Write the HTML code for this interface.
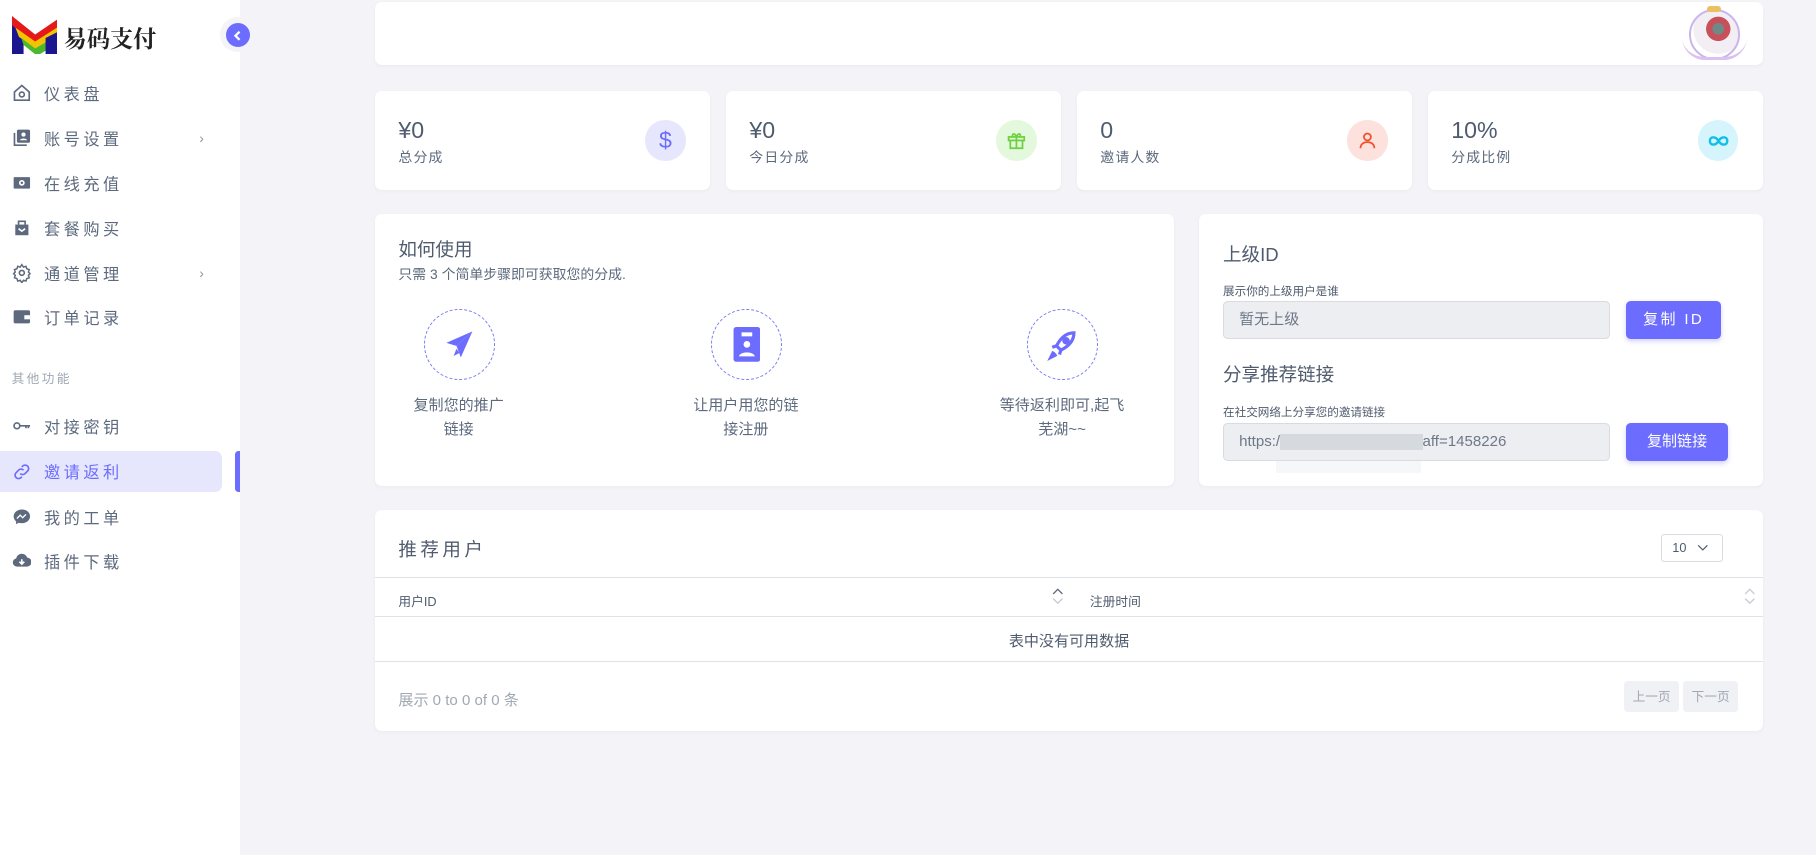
<!DOCTYPE html>
<html><head><meta charset="utf-8"><style>
html{zoom:1.1582}
*{box-sizing:border-box;margin:0;padding:0}
body{width:1568px;height:738px;background:#f4f4f8;font-family:"Liberation Sans","Noto Sans CJK SC",sans-serif;color:#5d6a7e;position:relative;overflow:hidden}
.abs{position:absolute}
.side{left:0;top:0;width:207px;height:738px;background:#fff}
.mi{position:absolute;left:0;width:192px;height:36px;display:flex;align-items:center;font-size:14px;letter-spacing:3px;color:#5d6a7e}
.mi svg{position:absolute;left:10px;width:17px;height:17px}
.mi span{position:absolute;left:38px}
.mi .ar{left:172px;font-size:12px;color:#8a94a6}
.card{position:absolute;background:#fff;border-radius:6px;box-shadow:0 1px 3px rgba(0,0,0,.04)}
.val{position:absolute;left:20px;top:22px;font-size:20px;color:#4f5b6e}
.lab{position:absolute;left:20px;top:48px;font-size:12px;letter-spacing:1px;color:#5d6a7e}
.ic{position:absolute;right:21px;top:25px;width:35px;height:35px;border-radius:50%;display:flex;align-items:center;justify-content:center}
.circ{position:absolute;width:61px;height:61px;border:1px dashed #7b7bf2;border-radius:50%;display:flex;align-items:center;justify-content:center}
.st{position:absolute;width:140px;text-align:center;font-size:13px;line-height:21px;color:#5d6a7e}
.inp{position:absolute;left:21px;width:334px;height:33px;background:#eceef2;border:1px solid #d8dbe0;border-radius:4px;font-size:13px;color:#6e7888;padding-left:13px;line-height:31px}
.btn{position:absolute;left:369px;height:33px;background:#6c6cff;color:#fff;border-radius:4px;font-size:13px;text-align:center;line-height:33px;box-shadow:0 2px 4px rgba(108,108,255,.3)}
.sort{position:absolute;width:10px;height:16px}
</style></head><body>
<div class="abs side">
  <svg class="abs" style="left:10px;top:14px" width="39" height="33" viewBox="0 0 39 33">
    <polygon points="0,0 0,33 10,33 10,12" fill="#1b1690"/>
    <polygon points="0,0 20,16 39,3 39,10 20,24 0,8" fill="#e41a1a"/>
    <polygon points="3,10 20,22 39,10 39,17 20,28 6,18" fill="#f5c400"/>
    <polygon points="8,19 20,28 39,17 39,24 24,33 20,33 10,25" fill="#4cb82c"/>
    <polygon points="29,19 39,14 39,33 29,33" fill="#1b1690"/>
  </svg>
  <div class="abs" style="left:55px;top:17px;font-size:20px;font-weight:bold;color:#222;font-family:'Noto Serif CJK SC',serif">易码支付</div>
  <div class="abs" style="left:190px;top:15px;width:30px;height:30px;border-radius:50%;background:#f4f4f8"></div>
  <div class="abs" style="left:195px;top:20px;width:21px;height:21px;border-radius:50%;background:#6c6cff;display:flex;align-items:center;justify-content:center"><svg width="10" height="10" viewBox="0 0 10 10"><path d="M6.5 1.5 3 5l3.5 3.5" stroke="#fff" stroke-width="2" fill="none"/></svg></div>

  <div class="mi" style="top:62px"><svg viewBox="0 0 24 24"><path d="M3 11 12 3l9 8v10H3z" fill="none" stroke="#5d6a7e" stroke-width="2"/><circle cx="12" cy="14" r="3" fill="none" stroke="#5d6a7e" stroke-width="2"/></svg><span>仪表盘</span></div>
  <div class="mi" style="top:101px"><svg viewBox="0 0 24 24"><path d="M3 6v15h15" fill="none" stroke="#5d6a7e" stroke-width="2"/><rect x="6" y="2" width="16" height="16" rx="2" fill="#5d6a7e"/><circle cx="14" cy="8" r="2.5" fill="#fff"/><path d="M9.5 15c1-3 8-3 9 0z" fill="#fff"/></svg><span>账号设置</span><span class="ar">›</span></div>
  <div class="mi" style="top:140px"><svg viewBox="0 0 24 24"><rect x="2" y="5" width="20" height="14" rx="1" fill="#5d6a7e"/><circle cx="12" cy="12" r="3.5" fill="#fff"/><circle cx="12" cy="12" r="1.5" fill="#5d6a7e"/></svg><span>在线充值</span></div>
  <div class="mi" style="top:179px"><svg viewBox="0 0 24 24"><path d="M4 8h16v13H4z" fill="#5d6a7e"/><path d="M8 8V4h8v4" fill="none" stroke="#5d6a7e" stroke-width="2"/><path d="M8 13l4 3 4-3" stroke="#fff" stroke-width="2" fill="none"/></svg><span>套餐购买</span></div>
  <div class="mi" style="top:218px"><svg viewBox="0 0 24 24"><circle cx="12" cy="12" r="3" fill="none" stroke="#5d6a7e" stroke-width="2"/><path d="M12 2l2 3 3-1 1 3 3 1-1 3 2 2-2 2 1 3-3 1-1 3-3-1-2 3-2-3-3 1-1-3-3-1 1-3-2-2 2-2-1-3 3-1 1-3 3 1z" fill="none" stroke="#5d6a7e" stroke-width="1.8"/></svg><span>通道管理</span><span class="ar">›</span></div>
  <div class="mi" style="top:256px"><svg viewBox="0 0 24 24"><rect x="2" y="4" width="20" height="16" rx="2" fill="#5d6a7e"/><rect x="15" y="10" width="7" height="5" fill="#fff"/></svg><span>订单记录</span></div>
  <div class="abs" style="left:10px;top:318px;font-size:11px;letter-spacing:2px;color:#a0a8b4">其他功能</div>
  <div class="mi" style="top:350px"><svg viewBox="0 0 24 24"><circle cx="6" cy="12" r="3.5" fill="none" stroke="#5d6a7e" stroke-width="2"/><path d="M10 12h12M17 12v3M20 12v3" stroke="#5d6a7e" stroke-width="2"/></svg><span>对接密钥</span></div>
  <div class="mi" style="top:389px;background:#e6e6fc;border-radius:0 6px 6px 0;color:#6c6cff"><svg viewBox="0 0 24 24"><path d="M10 14a4 4 0 0 0 6 0l3-3a4 4 0 0 0-6-6l-1 1M14 10a4 4 0 0 0-6 0l-3 3a4 4 0 0 0 6 6l1-1" fill="none" stroke="#6c6cff" stroke-width="2"/></svg><span>邀请返利</span></div>
  <div class="abs" style="left:203px;top:389px;width:4px;height:36px;background:#6c6cff;border-radius:3px 0 0 3px"></div>
  <div class="mi" style="top:428px"><svg viewBox="0 0 24 24"><path d="M12 3C6 3 2 7 2 11.5c0 2.5 1.2 4.6 3 6V21l3.2-1.8c1.2.4 2.4.5 3.8.5 6 0 10-4 10-8.5S18 3 12 3z" fill="#5d6a7e"/><path d="M6 14l4-4 3 3 4-4" stroke="#fff" stroke-width="1.6" fill="none"/></svg><span>我的工单</span></div>
  <div class="mi" style="top:466px"><svg viewBox="0 0 24 24"><path d="M6 19a5 5 0 0 1-1-9.9A7 7 0 0 1 18.5 8 5.5 5.5 0 0 1 18 19z" fill="#5d6a7e"/><path d="M12 10v6M9 13l3 3 3-3" stroke="#fff" stroke-width="2" fill="none"/></svg><span>插件下载</span></div>
</div>

<div class="card" style="left:324px;top:2px;width:1198px;height:54px">
  <div class="abs" style="left:1134px;top:6px;width:44px;height:44px;border-radius:50%;border:2px solid #c9b4ee;background:radial-gradient(circle at 58% 38%,#6e8a86 0 14%,#c8505a 15% 30%,#f2eef4 31% 62%,#fff 63%)"></div>
  <div class="abs" style="left:1128px;top:30px;width:56px;height:20px;border-radius:0 0 28px 28px;border-bottom:3px solid #dcc0f0"></div>
  <div class="abs" style="left:1150px;top:3px;width:12px;height:5px;background:#ebc060;border-radius:3px"></div>
</div>

<div class="card" style="left:324px;top:79px;width:289px;height:85px"><div class="val">¥0</div><div class="lab">总分成</div><div class="ic" style="background:#e6e6fc;color:#6c6cff;font-size:20px">$</div></div>
<div class="card" style="left:627px;top:79px;width:289px;height:85px"><div class="val">¥0</div><div class="lab">今日分成</div><div class="ic" style="background:#e3f8dc"><svg width="18" height="18" viewBox="0 0 24 24" fill="none" stroke="#6dd03c" stroke-width="2"><rect x="3" y="8" width="18" height="4"/><path d="M5 12v9h14v-9M12 8v13M12 8C10 3 6 4 8 8M12 8c2-5 6-4 4 0"/></svg></div></div>
<div class="card" style="left:930px;top:79px;width:289px;height:85px"><div class="val">0</div><div class="lab">邀请人数</div><div class="ic" style="background:#fde1dc"><svg width="18" height="18" viewBox="0 0 24 24" fill="none" stroke="#f0502e" stroke-width="2"><circle cx="12" cy="8" r="4"/><path d="M4 21c0-5 4-7 8-7s8 2 8 7"/></svg></div></div>
<div class="card" style="left:1233px;top:79px;width:289px;height:85px"><div class="val">10%</div><div class="lab">分成比例</div><div class="ic" style="background:#d6f4fb"><svg width="20" height="12" viewBox="0 0 24 12" fill="none" stroke="#10c0e8" stroke-width="2.5"><path d="M12 6C9 1 3 1 3 6s6 5 9 0 9-5 9 0-6 5-9 0z"/></svg></div></div>

<div class="card" style="left:324px;top:185px;width:690px;height:235px">
  <div class="abs" style="left:20px;top:19px;font-size:16px;color:#4f5b6e">如何使用</div>
  <div class="abs" style="left:20px;top:43px;font-size:12px;color:#5d6a7e">只需 3 个简单步骤即可获取您的分成.</div>
  <div class="circ" style="left:42px;top:82px"><svg width="30" height="30" viewBox="0 0 24 24"><path d="M21 3 3 11l7 2z" fill="#6c6cff"/><path d="M21 3 10 13l3 8z" fill="#6c6cff"/><path d="M10 15l-2 5 4-2z" fill="#6c6cff"/></svg></div>
  <div class="circ" style="left:290px;top:82px"><svg width="24" height="30" viewBox="0 0 20 26"><rect x="0" y="0" width="20" height="26" rx="2" fill="#6c6cff"/><rect x="6" y="4" width="8" height="3" fill="#fff"/><circle cx="10" cy="13" r="2.5" fill="#fff"/><path d="M4 22c1-4 11-4 12 0z" fill="#fff"/></svg></div>
  <div class="circ" style="left:563px;top:82px"><svg width="30" height="30" viewBox="0 0 24 24" fill="none" stroke="#6c6cff" stroke-width="2.2"><path d="M20 4c-5 0-9 3-12 9l3 3c6-3 9-7 9-12z"/><circle cx="14.5" cy="9.5" r="1.5" fill="#6c6cff"/><path d="M8 13l-3 1M11 16l-1 3" /><path d="M6 17l-2 4 4-2" fill="#6c6cff"/></svg></div>
  <div class="st" style="left:2px;top:155px">复制您的推广<br>链接</div>
  <div class="st" style="left:250px;top:155px">让用户用您的链<br>接注册</div>
  <div class="st" style="left:523px;top:155px">等待返利即可,起飞<br>芜湖~~</div>
</div>

<div class="card" style="left:1035px;top:185px;width:487px;height:235px">
  <div class="abs" style="left:21px;top:23px;font-size:16px;color:#4f5b6e">上级ID</div>
  <div class="abs" style="left:21px;top:59px;font-size:10px;color:#4f5b6e">展示你的上级用户是谁</div>
  <div class="inp" style="top:75px">暂无上级</div>
  <div class="btn" style="top:75px;width:82px;letter-spacing:2px">复制 ID</div>
  <div class="abs" style="left:21px;top:127px;font-size:16px;color:#4f5b6e">分享推荐链接</div>
  <div class="abs" style="left:21px;top:164px;font-size:10px;color:#4f5b6e">在社交网络上分享您的邀请链接</div>
  <div class="inp" style="top:180px">https:/<span style="display:inline-block;width:123px;height:14px;background:#d0d4da;vertical-align:middle;opacity:.8"></span>aff=1458226</div>
  <div class="abs" style="left:67px;top:213px;width:125px;height:10px;background:#f6f7f9"></div>
  <div class="btn" style="top:180px;width:88px">复制链接</div>
</div>

<div class="card" style="left:324px;top:440px;width:1198px;height:191px">
  <div class="abs" style="left:20px;top:23px;font-size:16px;letter-spacing:3px;color:#4f5b6e">推荐用户</div>
  <div class="abs" style="left:1110px;top:21px;width:54px;height:24px;border:1px solid #d8dbe0;border-radius:3px;font-size:11px;line-height:22px;padding-left:9px;color:#4f5b6e">10 <svg width="10" height="8" viewBox="0 0 10 8" style="margin-left:6px"><path d="M1 2l4 4 4-4" stroke="#4f5b6e" fill="none"/></svg></div>
  <div class="abs" style="left:0;top:58px;width:1198px;height:35px;border-top:1px solid #dfe2e6;border-bottom:1px solid #dfe2e6"></div>
  <div class="abs" style="left:20px;top:70px;font-size:11px;color:#4f5b6e">用户ID</div>
  <svg class="sort" style="left:584px;top:67px" viewBox="0 0 10 16"><path d="M1 6l4-4 4 4" stroke="#5d6a7e" fill="none" stroke-width="1.2"/><path d="M1 10l4 4 4-4" stroke="#c8ccd4" fill="none" stroke-width="1.2"/></svg>
  <div class="abs" style="left:617px;top:70px;font-size:11px;color:#4f5b6e">注册时间</div>
  <svg class="sort" style="left:1182px;top:67px" viewBox="0 0 10 16"><path d="M1 6l4-4 4 4" stroke="#c8ccd4" fill="none" stroke-width="1.2"/><path d="M1 10l4 4 4-4" stroke="#c8ccd4" fill="none" stroke-width="1.2"/></svg>
  <div class="abs" style="left:0;top:104px;width:1198px;text-align:center;font-size:13px;color:#4f5b6e">表中没有可用数据</div>
  <div class="abs" style="left:0;top:131px;width:1198px;border-top:1px solid #dfe2e6"></div>
  <div class="abs" style="left:20px;top:155px;font-size:13px;color:#a0a8b4">展示 0 to 0 of 0 条</div>
  <div class="abs" style="left:1078px;top:148px;width:48px;height:27px;background:#f0f1f4;border-radius:3px;font-size:11px;color:#a0a8b4;text-align:center;line-height:27px">上一页</div>
  <div class="abs" style="left:1129px;top:148px;width:48px;height:27px;background:#f0f1f4;border-radius:3px;font-size:11px;color:#a0a8b4;text-align:center;line-height:27px">下一页</div>
</div>
</body></html>
